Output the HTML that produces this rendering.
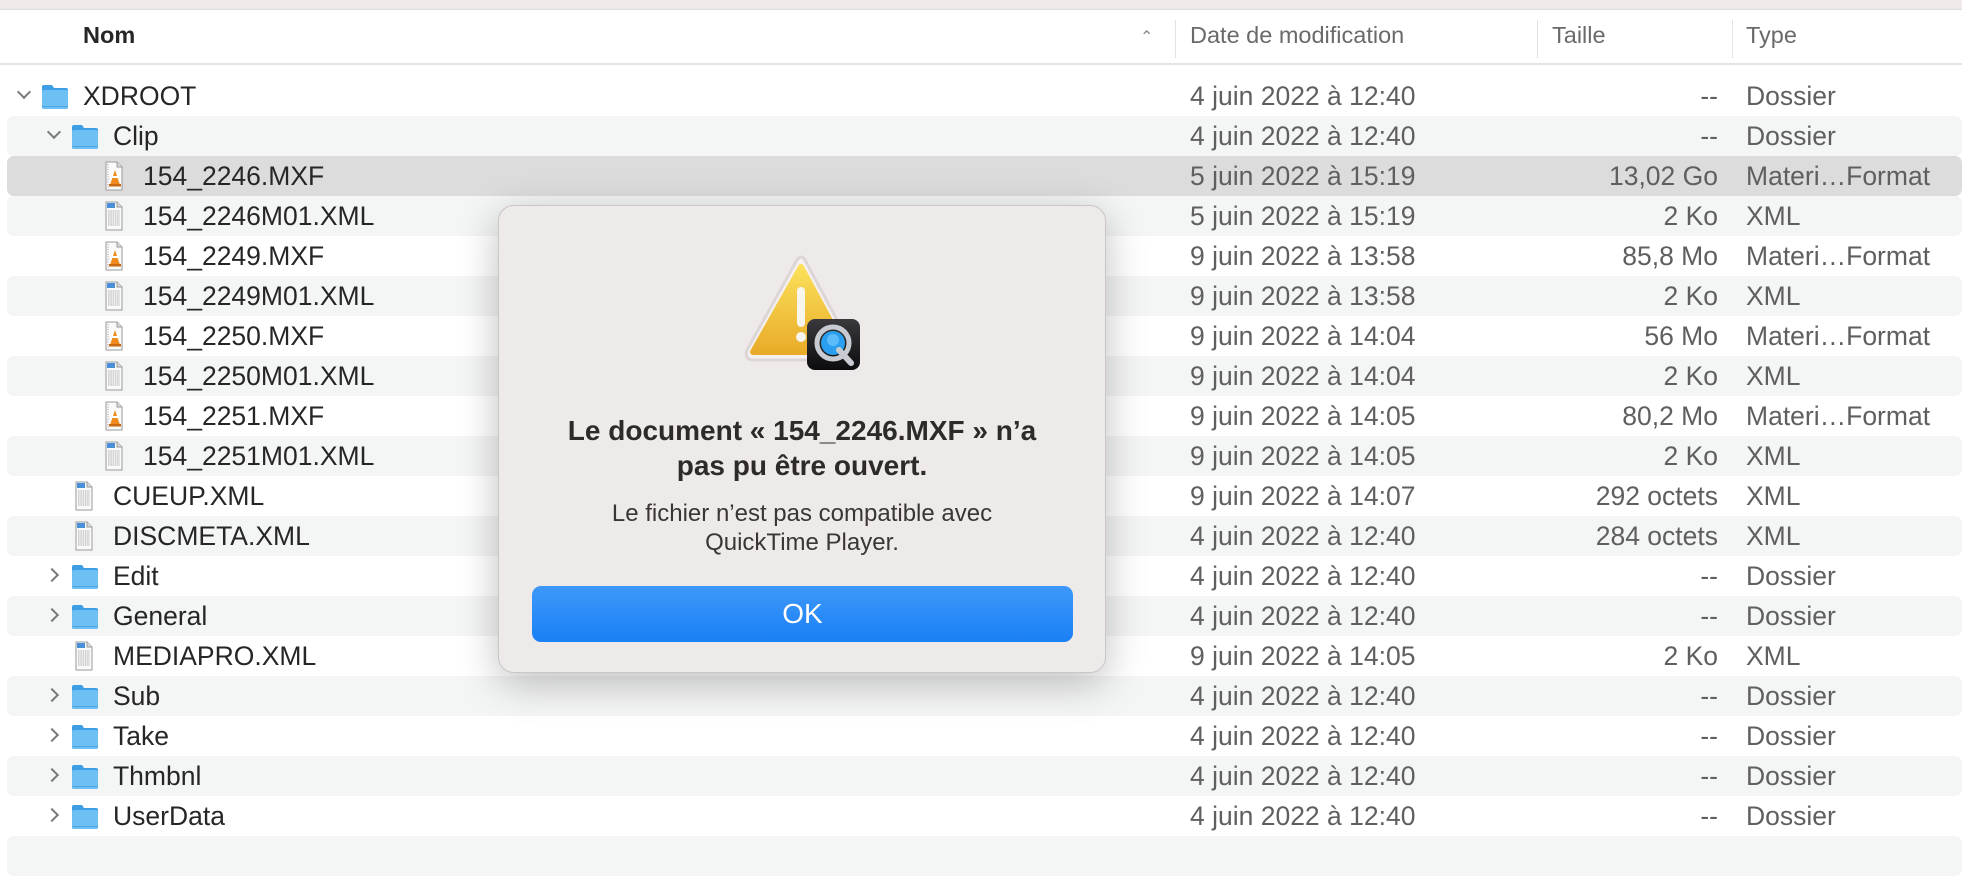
<!DOCTYPE html>
<html><head><meta charset="utf-8"><style>
*{margin:0;padding:0;box-sizing:border-box}
body{width:1962px;height:874px;overflow:hidden;background:#fff;font-family:"Liberation Sans",sans-serif;position:relative}
.top{position:absolute;left:0;top:0;width:1962px;height:10px;background:#efe9e9;border-bottom:1px solid #dcdcdc}
.hdr{position:absolute;left:0;top:10px;width:1962px;height:55px;border-bottom:2px solid #e4e4e4;font-size:23.5px;color:#6a6a6a}
.hdr span{position:absolute;top:12px}
.sep{position:absolute;top:10px;width:1px;height:38px;background:#e2e2e2}
.row{position:absolute;left:7px;width:1955px;height:40px;border-radius:7px;font-size:26.5px;color:#262626}
.odd{background:#f4f5f5}
.sel{background:#dcdcdc}
.row .n{position:absolute;top:5px;white-space:nowrap}
.row .d{position:absolute;left:1183px;top:5px;color:#5f5f5f;white-space:nowrap}
.row .s{position:absolute;right:244px;top:5px;color:#5f5f5f;text-align:right;white-space:nowrap}
.row .t{position:absolute;left:1739px;top:5px;color:#5f5f5f;white-space:nowrap}
.chev{position:absolute;top:11px;width:10px;height:10px;border-right:2px solid #7a7a7a;border-bottom:2px solid #7a7a7a}
.down{transform:rotate(45deg)}
.right{transform:rotate(-45deg);top:14px}
.fold{position:absolute;top:7px;width:28px;height:27px}
.file{position:absolute;top:5px;width:20px;height:30px}
.dlg{position:absolute;left:498px;top:205px;width:608px;height:468px;background:#efeaea;border:1px solid #c9c6c6;border-radius:16px;box-shadow:0 10px 40px rgba(0,0,0,.25)}
.t1{position:absolute;left:0;width:606px;top:207px;text-align:center;font-weight:bold;font-size:28px;line-height:35px;color:#2e2a2a;white-space:nowrap}
.t2{position:absolute;left:0;width:606px;top:293px;text-align:center;font-size:24px;line-height:29px;color:#3a3636;white-space:nowrap}
.ok{position:absolute;left:33px;top:380px;width:541px;height:56px;border-radius:9px;background:linear-gradient(#3d98f9,#1a80f6);color:#fff;font-size:28px;text-align:center;line-height:56px}
</style></head><body>
<div class="top"></div>
<div class="hdr">
<span style="left:83px;font-weight:bold;color:#262626">Nom</span>
<span style="left:1140px;top:17px;font-size:16px;color:#888">&#8963;</span>
<div class="sep" style="left:1175px"></div>
<span style="left:1190px">Date de modification</span>
<div class="sep" style="left:1537px"></div>
<span style="left:1552px">Taille</span>
<div class="sep" style="left:1732px"></div>
<span style="left:1746px">Type</span>
</div>

<svg width="0" height="0" style="position:absolute">
<defs>
<symbol id="fo" viewBox="0 0 28 27"><path d="M1 4a2 2 0 0 1 2-2h8l2 3h12a2 2 0 0 1 2 2v17a2 2 0 0 1-2 2H3a2 2 0 0 1-2-2z" fill="#3d9ee6"/><rect x="1" y="7" width="26" height="19" rx="2" fill="#6cc0f4"/><rect x="1" y="23" width="26" height="1" fill="#4fa6e0"/></symbol>
<symbol id="vl" viewBox="0 0 18 30"><path d="M1 1h11l5 5v23H1z" fill="#fafafa" stroke="#9a9a9a"/><path d="M12 1v5h5" fill="#ddd" stroke="#9a9a9a"/><path d="M3 3v25" stroke="#999" stroke-dasharray="1 1.5"/><path d="M10 9l-5 15h10z" fill="#f08a1c"/><rect x="4" y="23" width="12" height="2.5" fill="#c86a10"/><rect x="7" y="15" width="6" height="2" fill="#fff"/></symbol>
<symbol id="xm" viewBox="0 0 18 30"><path d="M1 1h11l5 5v23H1z" fill="#fafafa" stroke="#9a9a9a"/><path d="M12 1v5h5" fill="#ddd" stroke="#9a9a9a"/><rect x="2" y="2" width="8" height="5" fill="#4a90d9"/><path d="M3 10h12M3 12h12M3 14h12M3 16h12M3 18h12M3 20h12M3 22h12M3 24h12" stroke="#aaa" stroke-dasharray="1.5 .8"/></symbol>
</defs></svg>

<div class="row" style="top:76px"><div class="chev down" style="left:12px"></div><svg class="fold" style="left:34px"><use href="#fo"/></svg><span class="n" style="left:76px">XDROOT</span><span class="d">4 juin 2022 à 12:40</span><span class="s">--</span><span class="t">Dossier</span></div>
<div class="row odd" style="top:116px"><div class="chev down" style="left:42px"></div><svg class="fold" style="left:64px"><use href="#fo"/></svg><span class="n" style="left:106px">Clip</span><span class="d">4 juin 2022 à 12:40</span><span class="s">--</span><span class="t">Dossier</span></div>
<div class="row sel" style="top:156px"><svg class="file" style="left:97px"><use href="#vl"/></svg><span class="n" style="left:136px">154_2246.MXF</span><span class="d">5 juin 2022 à 15:19</span><span class="s">13,02 Go</span><span class="t">Materi…Format</span></div>
<div class="row odd" style="top:196px"><svg class="file" style="left:97px"><use href="#xm"/></svg><span class="n" style="left:136px">154_2246M01.XML</span><span class="d">5 juin 2022 à 15:19</span><span class="s">2 Ko</span><span class="t">XML</span></div>
<div class="row" style="top:236px"><svg class="file" style="left:97px"><use href="#vl"/></svg><span class="n" style="left:136px">154_2249.MXF</span><span class="d">9 juin 2022 à 13:58</span><span class="s">85,8 Mo</span><span class="t">Materi…Format</span></div>
<div class="row odd" style="top:276px"><svg class="file" style="left:97px"><use href="#xm"/></svg><span class="n" style="left:136px">154_2249M01.XML</span><span class="d">9 juin 2022 à 13:58</span><span class="s">2 Ko</span><span class="t">XML</span></div>
<div class="row" style="top:316px"><svg class="file" style="left:97px"><use href="#vl"/></svg><span class="n" style="left:136px">154_2250.MXF</span><span class="d">9 juin 2022 à 14:04</span><span class="s">56 Mo</span><span class="t">Materi…Format</span></div>
<div class="row odd" style="top:356px"><svg class="file" style="left:97px"><use href="#xm"/></svg><span class="n" style="left:136px">154_2250M01.XML</span><span class="d">9 juin 2022 à 14:04</span><span class="s">2 Ko</span><span class="t">XML</span></div>
<div class="row" style="top:396px"><svg class="file" style="left:97px"><use href="#vl"/></svg><span class="n" style="left:136px">154_2251.MXF</span><span class="d">9 juin 2022 à 14:05</span><span class="s">80,2 Mo</span><span class="t">Materi…Format</span></div>
<div class="row odd" style="top:436px"><svg class="file" style="left:97px"><use href="#xm"/></svg><span class="n" style="left:136px">154_2251M01.XML</span><span class="d">9 juin 2022 à 14:05</span><span class="s">2 Ko</span><span class="t">XML</span></div>
<div class="row" style="top:476px"><svg class="file" style="left:67px"><use href="#xm"/></svg><span class="n" style="left:106px">CUEUP.XML</span><span class="d">9 juin 2022 à 14:07</span><span class="s">292 octets</span><span class="t">XML</span></div>
<div class="row odd" style="top:516px"><svg class="file" style="left:67px"><use href="#xm"/></svg><span class="n" style="left:106px">DISCMETA.XML</span><span class="d">4 juin 2022 à 12:40</span><span class="s">284 octets</span><span class="t">XML</span></div>
<div class="row" style="top:556px"><div class="chev right" style="left:40px"></div><svg class="fold" style="left:64px"><use href="#fo"/></svg><span class="n" style="left:106px">Edit</span><span class="d">4 juin 2022 à 12:40</span><span class="s">--</span><span class="t">Dossier</span></div>
<div class="row odd" style="top:596px"><div class="chev right" style="left:40px"></div><svg class="fold" style="left:64px"><use href="#fo"/></svg><span class="n" style="left:106px">General</span><span class="d">4 juin 2022 à 12:40</span><span class="s">--</span><span class="t">Dossier</span></div>
<div class="row" style="top:636px"><svg class="file" style="left:67px"><use href="#xm"/></svg><span class="n" style="left:106px">MEDIAPRO.XML</span><span class="d">9 juin 2022 à 14:05</span><span class="s">2 Ko</span><span class="t">XML</span></div>
<div class="row odd" style="top:676px"><div class="chev right" style="left:40px"></div><svg class="fold" style="left:64px"><use href="#fo"/></svg><span class="n" style="left:106px">Sub</span><span class="d">4 juin 2022 à 12:40</span><span class="s">--</span><span class="t">Dossier</span></div>
<div class="row" style="top:716px"><div class="chev right" style="left:40px"></div><svg class="fold" style="left:64px"><use href="#fo"/></svg><span class="n" style="left:106px">Take</span><span class="d">4 juin 2022 à 12:40</span><span class="s">--</span><span class="t">Dossier</span></div>
<div class="row odd" style="top:756px"><div class="chev right" style="left:40px"></div><svg class="fold" style="left:64px"><use href="#fo"/></svg><span class="n" style="left:106px">Thmbnl</span><span class="d">4 juin 2022 à 12:40</span><span class="s">--</span><span class="t">Dossier</span></div>
<div class="row" style="top:796px"><div class="chev right" style="left:40px"></div><svg class="fold" style="left:64px"><use href="#fo"/></svg><span class="n" style="left:106px">UserData</span><span class="d">4 juin 2022 à 12:40</span><span class="s">--</span><span class="t">Dossier</span></div>
<div class="row odd" style="top:836px"></div>

<div class="dlg">
<svg style="position:absolute;left:240px;top:48px" width="130" height="120" viewBox="0 0 130 120">
<defs><linearGradient id="g" x1="0" y1="0" x2="0" y2="1"><stop offset="0" stop-color="#fbe05a"/><stop offset="1" stop-color="#e9ac2a"/></linearGradient>
<linearGradient id="q" x1="0" y1="0" x2="0" y2="1"><stop offset="0" stop-color="#3a3a3e"/><stop offset="1" stop-color="#0c0c0e"/></linearGradient></defs>
<path d="M58 6 Q62 0 66 6 L114 96 Q117 106 107 106 L15 106 Q5 106 8 96 Z" fill="#f6f1f1" stroke="#dcd6d6" stroke-width="3" stroke-linejoin="round"/>
<path d="M62 13 L108 98 L14 98 Z" fill="url(#g)" stroke="url(#g)" stroke-width="6" stroke-linejoin="round"/>
<rect x="58" y="33" width="8" height="40" rx="4" fill="#f8f4ee"/>
<circle cx="62" cy="83" r="5" fill="#f8f4ee"/>
<rect x="68" y="65" width="53" height="51" rx="8" fill="url(#q)"/>
<circle cx="94" cy="89" r="16" fill="none" stroke="#c8ccd2" stroke-width="5"/>
<circle cx="94" cy="89" r="12" fill="#2a9ff0"/>
<circle cx="94" cy="86" r="6" fill="#7fd0ff" opacity=".6"/>
<path d="M100 96 L112 109" stroke="#c8ccd2" stroke-width="6" stroke-linecap="round"/>
</svg>
<div class="t1">Le document « 154_2246.MXF » n’a<br>pas pu être ouvert.</div>
<div class="t2">Le fichier n’est pas compatible avec<br>QuickTime Player.</div>
<div class="ok">OK</div>
</div>
</body></html>
